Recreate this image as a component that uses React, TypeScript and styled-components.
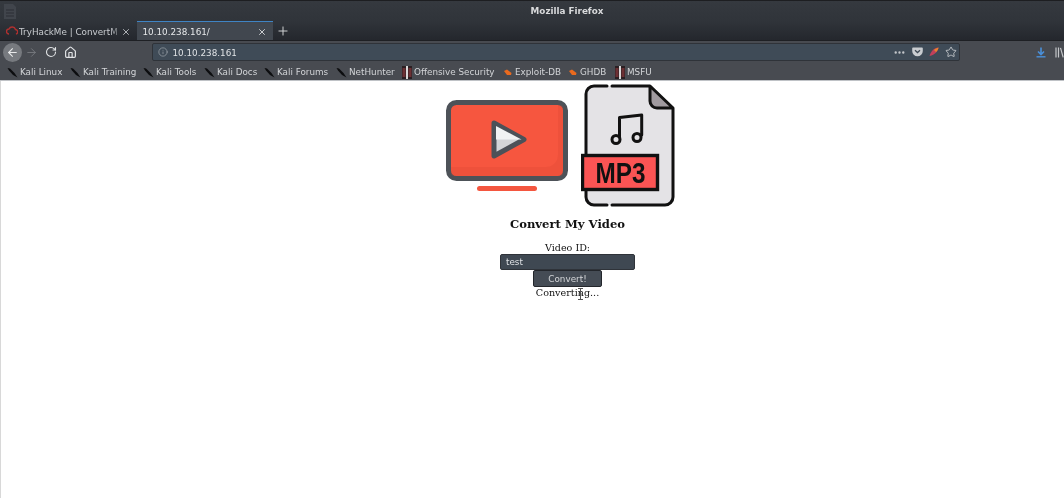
import { createGlobalStyle, styled } from 'styled-components'
import { ArrowLeft, ArrowRight, Home, Info, MoreHorizontal, Plus, RotateCw, Star, X } from 'lucide-react'

const bookmarks = [
  { label: 'Kali Linux', icon: 'kali', pitch: 63 },
  { label: 'Kali Training', icon: 'kali', pitch: 73 },
  { label: 'Kali Tools', icon: 'kali', pitch: 61 },
  { label: 'Kali Docs', icon: 'kali', pitch: 60 },
  { label: 'Kali Forums', icon: 'kali', pitch: 72 },
  { label: 'NetHunter', icon: 'kali', pitch: 66 },
  { label: 'Offensive Security', icon: 'offsec', pitch: 101 },
  { label: 'Exploit-DB', icon: 'flame', pitch: 65 },
  { label: 'GHDB', icon: 'flame', pitch: 47 },
  { label: 'MSFU', icon: 'offsec', pitch: 50 },
]

function BookmarkIcon({ kind }: { kind: string }) {
  if (kind === 'kali') {
    return (
      <svg width="11" height="11" viewBox="0 0 11 11">
        <path d="M0.5 1 L3 1.5 L7.5 6 L10.5 10.5 L6 8 L2 3.5 Z" fill="#0c0d0f" />
      </svg>
    )
  }
  if (kind === 'flame') {
    return (
      <svg width="10" height="9" viewBox="0 0 10 9">
        <path d="M1 3 L4 1.5 L8.5 5 L8 7 L4 7 Z" fill="#ea6a1e" />
      </svg>
    )
  }
  return (
    <svg width="10" height="13" viewBox="0 0 10 13">
      <rect width="10" height="13" fill="#2b1f22" />
      <rect x="0.5" y="2" width="3" height="9" fill="#6d3034" />
      <rect x="6.5" y="2" width="3" height="9" fill="#6d3034" />
      <rect x="4" y="0" width="2" height="13" fill="#d8d8d8" />
    </svg>
  )
}

function VideoIcon() {
  return (
    <svg width="122" height="96" viewBox="0 0 122 96">
      <rect x="2.5" y="2.5" width="117" height="76" rx="8" fill="#f6563f" stroke="#4d5258" strokeWidth="5" />
      <path d="M112 5 h2 a3 3 0 0 1 3 3 v65 a3 3 0 0 1 -3 3 H8 a3 3 0 0 1 -3 -3 V67 H100 a12 12 0 0 0 12 -12 Z" fill="#d8432e" opacity="0.25" />
      <path d="M48 23 L78 39.5 L48 56 Z" fill="#d3d5d8" stroke="#4c5158" strokeWidth="5" strokeLinejoin="round" />
      <path d="M50 26 L75.5 39.5 H50 Z" fill="#f1f2f3" />
      <rect x="31" y="86" width="60" height="5" rx="2.5" fill="#f4563f" />
    </svg>
  )
}

function Mp3Icon() {
  return (
    <svg width="94" height="124" viewBox="0 0 94 124">
      <path d="M13 2 H69 L92 24 V113 a8 8 0 0 1 -8 8 H13 a8 8 0 0 1 -8 -8 V10 a8 8 0 0 1 8 -8 Z" fill="#e4e3e6" />
      <path d="M69 3 V17 a7 7 0 0 0 7 7 H91 Z" fill="#a09a9f" />
      <path
        d="M26 2 H13 a8 8 0 0 0 -8 8 V70 M5 106 V113 a8 8 0 0 0 8 8 H26 M31 121 H84 a8 8 0 0 0 8 -8 V24 L69 2 H31 M69 3 V17 a7 7 0 0 0 7 7 H91"
        fill="none"
        stroke="#111"
        strokeWidth="3"
        strokeLinecap="round"
        strokeLinejoin="round"
      />
      <path d="M38.5 53 V33.5 L60.7 31 V51" fill="none" stroke="#111" strokeWidth="3" strokeLinecap="round" strokeLinejoin="round" />
      <circle cx="35" cy="55.5" r="4" fill="none" stroke="#111" strokeWidth="3" />
      <circle cx="56" cy="53.5" r="4" fill="none" stroke="#111" strokeWidth="3" />
      <rect x="1.5" y="71.5" width="75" height="34" fill="#fb5454" stroke="#111" strokeWidth="3.4" />
      <text x="39.5" y="99" textAnchor="middle" fontFamily="'Liberation Sans', sans-serif" fontWeight="700" fontSize="29" fill="#111" textLength="50" lengthAdjust="spacingAndGlyphs">MP3</text>
    </svg>
  )
}

function App() {
  return (
    <>
      <GlobalStyle />
      <Window>
        <TitleBar>
          <WindowBadge>
            <svg width="14" height="17" viewBox="0 0 14 17">
              <path d="M1 1 H10 L13 4 V16 H1 Z" fill="#41454c" />
              <path d="M3 7 H11 M3 10 H11 M3 13 H11" stroke="#33363d" strokeWidth="1.5" />
            </svg>
          </WindowBadge>
          Mozilla Firefox
        </TitleBar>

        <TabStrip>
          <Tab>
            <svg width="12" height="11" viewBox="0 0 12 11">
              <path d="M3 8 a2.5 2.5 0 0 1 0 -5 a3.5 3.5 0 0 1 6.5 0.5 a2.3 2.3 0 0 1 0.5 4.5" fill="none" stroke="#b0302f" strokeWidth="1.4" />
            </svg>
            <TabLabel $faded>TryHackMe | ConvertM</TabLabel>
            <X size={10} strokeWidth={2} />
          </Tab>
          <Tab $active>
            <TabLabel>10.10.238.161/</TabLabel>
            <X size={10} strokeWidth={2} />
          </Tab>
          <NewTab>
            <Plus size={14} strokeWidth={1.6} />
          </NewTab>
        </TabStrip>

        <NavBar>
          <BackButton>
            <ArrowLeft size={13} strokeWidth={2} />
          </BackButton>
          <NavIcon $dim>
            <ArrowRight size={13} strokeWidth={1.8} />
          </NavIcon>
          <NavIcon>
            <RotateCw size={12} strokeWidth={2.2} />
          </NavIcon>
          <NavIcon>
            <Home size={13} strokeWidth={2.2} />
          </NavIcon>
          <UrlBar>
            <Info size={10} strokeWidth={1.5} color="#a9afb6" />
            <UrlText>10.10.238.161</UrlText>
            <UrlActions>
              <MoreHorizontal size={13} strokeWidth={2.4} color="#c3c6ca" />
              <svg width="11" height="10" viewBox="0 0 11 10">
                <path d="M1 0.5 H10 a0.8 0.8 0 0 1 0.8 0.8 V4 a5.3 5.3 0 0 1 -10.6 0 V1.3 A0.8 0.8 0 0 1 1 0.5 Z" fill="#c9ccd0" />
                <path d="M3 3.3 L5.5 5.6 L8 3.3" fill="none" stroke="#3f4a55" strokeWidth="1.3" />
              </svg>
              <svg width="10" height="10" viewBox="0 0 10 10">
                <path d="M0.5 9 C2 4 5 1 9.5 0.5 C9 4 6 8 0.5 9 Z" fill="#c2405a" />
                <path d="M5 3 C6.5 1.5 8 1 9.5 0.5 C9.3 2 8.5 3.5 7 5 Z" fill="#e8842c" />
              </svg>
              <Star size={12} strokeWidth={1.6} color="#d6d8da" />
            </UrlActions>
          </UrlBar>
          <NavRight>
            <svg width="10" height="11" viewBox="0 0 10 11">
              <path d="M5 0.5 V7 M2 4.5 L5 7.5 L8 4.5" fill="none" stroke="#4a90d9" strokeWidth="1.6" />
              <path d="M0.5 9.8 H9.5" stroke="#4a90d9" strokeWidth="1.4" />
            </svg>
            <svg width="9" height="11" viewBox="0 0 9 11">
              <path d="M1 0.5 V10.5 M3.5 0.5 V10.5 M5.5 0.8 L8.2 10.3" stroke="#c4c6c9" strokeWidth="1.2" fill="none" />
            </svg>
          </NavRight>
        </NavBar>

        <BookmarkBar>
          {bookmarks.map((item) => (
            <Bookmark key={item.label} $pitch={item.pitch}>
              <BookmarkIcon kind={item.icon} />
              {item.label}
            </Bookmark>
          ))}
        </BookmarkBar>

        <Page>
          <Banner>
            <VideoIcon />
            <Mp3Icon />
          </Banner>
          <Heading>Convert My Video</Heading>
          <FieldLabel>Video ID:</FieldLabel>
          <VideoInput defaultValue="test" />
          <ConvertButton>Convert!</ConvertButton>
          <Status>
            Converting...
            <Cursor width="7" height="12" viewBox="0 0 7 12">
              <path d="M1 0.5 H6 M3.5 0.5 V11.5 M1 11.5 H6 M1.5 6 H5.5" stroke="#555" strokeWidth="1" fill="none" />
            </Cursor>
          </Status>
        </Page>
      </Window>
    </>
  )
}

const GlobalStyle = createGlobalStyle`
  html, body {
    margin: 0;
    padding: 0;
    background: #fff;
  }
`

const Window = styled.div`
  width: 1064px;
  height: 498px;
  overflow: hidden;
  display: flex;
  flex-direction: column;
  font-family: 'DejaVu Sans', sans-serif;
  filter: blur(0.35px);
`

const TitleBar = styled.div`
  position: relative;
  height: 21px;
  padding-top: 5px;
  box-sizing: border-box;
  border-top: 1px solid #1d1e21;
  background: linear-gradient(#35393f, #30343a);
  color: #d9dadc;
  font-size: 8.8px;
  font-weight: 700;
  text-align: center;
  padding-left: 70px;
`

const WindowBadge = styled.span`
  position: absolute;
  left: 3px;
  top: 2px;
`

const TabStrip = styled.div`
  height: 20px;
  display: flex;
  align-items: stretch;
  background: linear-gradient(#30343a, #24272d);
  border-bottom: 1px solid #1e2024;
  box-sizing: border-box;
`

const Tab = styled.div<{ $active?: boolean }>`
  width: 136.5px;
  box-sizing: border-box;
  display: flex;
  align-items: center;
  gap: ${(p) => (p.$active ? '0' : '1px')};
  padding: 1px 6px 0 6px;
  color: ${(p) => (p.$active ? '#e6e8ea' : '#c9ccd0')};
  font-size: 8.8px;
  background: ${(p) => (p.$active ? '#41474f' : 'transparent')};
  border-top: ${(p) => (p.$active ? '1px solid #3f84c4' : '1px solid transparent')};
`

const TabLabel = styled.span<{ $faded?: boolean }>`
  flex: 1;
  overflow: hidden;
  white-space: nowrap;
  ${(p) => p.$faded && 'mask-image: linear-gradient(to right, #000 90%, rgba(0, 0, 0, 0.25));'}
`

const NewTab = styled.div`
  width: 20px;
  display: flex;
  align-items: center;
  justify-content: center;
  color: #d8dadc;
`

const NavBar = styled.div`
  height: 22px;
  display: flex;
  align-items: center;
  padding-left: 3px;
  background: #484b51;
  color: #d8dadd;
`

const BackButton = styled.div`
  width: 19px;
  height: 19px;
  border-radius: 50%;
  background: #777a7f;
  color: #e8e9ea;
  display: flex;
  align-items: center;
  justify-content: center;
`

const NavIcon = styled.div<{ $dim?: boolean }>`
  width: 19.5px;
  display: flex;
  justify-content: center;
  color: ${(p) => (p.$dim ? '#74777c' : '#e2e4e6')};
`

const UrlBar = styled.div`
  margin-left: 71px;
  width: 808px;
  height: 18px;
  box-sizing: border-box;
  display: flex;
  align-items: center;
  padding: 0 2px 0 5px;
  gap: 5px;
  background: #3f4b57;
  border: 1px solid #2f3339;
  border-radius: 2px;
`

const UrlText = styled.span`
  flex: 1;
  padding-top: 1px;
  font-size: 8.8px;
  color: #dfe2e5;
`

const UrlActions = styled.div`
  display: flex;
  align-items: center;
  gap: 6px;
`

const NavRight = styled.div`
  margin-left: 76px;
  display: flex;
  align-items: center;
  gap: 9px;
  flex: 1;
`

const BookmarkBar = styled.div`
  height: 18px;
  display: flex;
  align-items: center;
  padding: 1px 0 0 7px;
  background: #484b51;
  border-bottom: 1px solid #bfc2c6;
  box-sizing: border-box;
`

const Bookmark = styled.div<{ $pitch: number }>`
  flex: none;
  width: ${(p) => p.$pitch}px;
  display: flex;
  align-items: center;
  gap: 2px;
  color: #d2d4d7;
  font-size: 8.8px;
  white-space: nowrap;
`

const Page = styled.main`
  flex: 1;
  display: flex;
  flex-direction: column;
  align-items: center;
  padding: 3px 0 0 70px;
  background: #fff;
  border-left: 1px solid #d8d8d8;
  font-family: 'DejaVu Serif', serif;
  color: #111;
`

const Banner = styled.div`
  display: flex;
  align-items: flex-start;
  gap: 13px;
  margin-right: 14px;
  height: 124px;

  & > svg:first-child {
    margin-top: 16px;
  }
`

const Heading = styled.h1`
  margin: 9px 0 0;
  font-size: 11.6px;
  line-height: 15px;
  font-weight: 700;
`

const FieldLabel = styled.label`
  margin-top: 9px;
  font-size: 9.6px;
  line-height: 13px;
`

const VideoInput = styled.input`
  width: 135px;
  height: 16px;
  box-sizing: border-box;
  padding: 0 5px;
  border: 1px solid #2f3339;
  border-radius: 2px;
  background: #3f4852;
  color: #dfe2e5;
  font: 8.8px 'DejaVu Sans', sans-serif;
  outline: none;
`

const ConvertButton = styled.button`
  width: 69px;
  height: 17px;
  margin-top: 0;
  padding: 0;
  border: 1px solid #23262b;
  border-radius: 2px;
  background: #454c55;
  color: #d4d6d9;
  font: 8.8px 'DejaVu Sans', sans-serif;
`

const Status = styled.div`
  position: relative;
  font-size: 9.6px;
  line-height: 12px;
`

const Cursor = styled.svg`
  position: absolute;
  left: 41px;
  top: 1px;
`

export default App
